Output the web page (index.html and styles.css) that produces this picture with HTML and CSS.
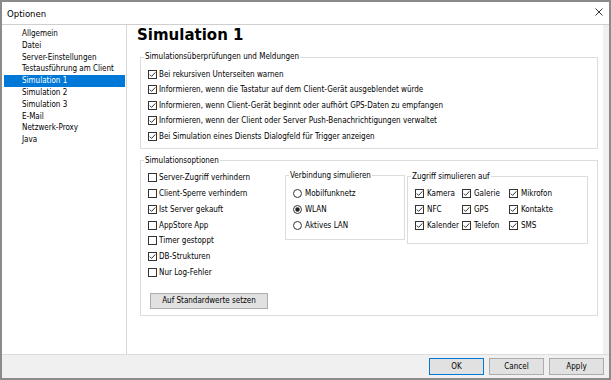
FILE: index.html
```html
<!DOCTYPE html>
<html lang="de">
<head>
<meta charset="utf-8">
<title>Optionen</title>
<link rel="stylesheet" href="styles.css">
</head>
<body>
<div class="window">
  <header class="titlebar">
    <span class="title">Optionen</span>
    <svg class="close" viewBox="0 0 8 8"><path d="M0.5 0.5 7.5 7.5 M7.5 0.5 0.5 7.5"/></svg>
  </header>
  <div class="main">
    <ul class="nav">
      <li>Allgemein</li>
      <li>Datei</li>
      <li>Server-Einstellungen</li>
      <li>Testausführung am Client</li>
      <li class="sel">Simulation 1</li>
      <li>Simulation 2</li>
      <li>Simulation 3</li>
      <li>E-Mail</li>
      <li>Netzwerk-Proxy</li>
      <li>Java</li>
    </ul>
    <section class="page">
      <h1>Simulation 1</h1>
      <fieldset class="group g1">
        <legend>Simulationsüberprüfungen und Meldungen</legend>
        <div class="checks">
          <label class="cb"><svg class="box" viewBox="0 0 9 9"><rect x=".5" y=".5" width="8" height="8"/><path d="M1.8 4.6 3.6 6.4 7.3 2.4"/></svg>Bei rekursiven Unterseiten warnen</label>
          <label class="cb"><svg class="box" viewBox="0 0 9 9"><rect x=".5" y=".5" width="8" height="8"/><path d="M1.8 4.6 3.6 6.4 7.3 2.4"/></svg>Informieren, wenn die Tastatur auf dem Client-Gerät ausgeblendet würde</label>
          <label class="cb"><svg class="box" viewBox="0 0 9 9"><rect x=".5" y=".5" width="8" height="8"/><path d="M1.8 4.6 3.6 6.4 7.3 2.4"/></svg>Informieren, wenn Client-Gerät beginnt oder aufhört GPS-Daten zu empfangen</label>
          <label class="cb"><svg class="box" viewBox="0 0 9 9"><rect x=".5" y=".5" width="8" height="8"/><path d="M1.8 4.6 3.6 6.4 7.3 2.4"/></svg>Informieren, wenn der Client oder Server Push-Benachrichtigungen verwaltet</label>
          <label class="cb"><svg class="box" viewBox="0 0 9 9"><rect x=".5" y=".5" width="8" height="8"/><path d="M1.8 4.6 3.6 6.4 7.3 2.4"/></svg>Bei Simulation eines Diensts Dialogfeld für Trigger anzeigen</label>
        </div>
      </fieldset>
      <fieldset class="group g2">
        <legend>Simulationsoptionen</legend>
        <div class="opts">
          <div class="col1">
            <label class="cb opt"><svg class="box" viewBox="0 0 9 9"><rect x=".5" y=".5" width="8" height="8"/></svg>Server-Zugriff verhindern</label>
            <label class="cb opt"><svg class="box" viewBox="0 0 9 9"><rect x=".5" y=".5" width="8" height="8"/></svg>Client-Sperre verhindern</label>
            <label class="cb opt"><svg class="box" viewBox="0 0 9 9"><rect x=".5" y=".5" width="8" height="8"/><path d="M1.8 4.6 3.6 6.4 7.3 2.4"/></svg>Ist Server gekauft</label>
            <label class="cb opt"><svg class="box" viewBox="0 0 9 9"><rect x=".5" y=".5" width="8" height="8"/></svg>AppStore App</label>
            <label class="cb opt"><svg class="box" viewBox="0 0 9 9"><rect x=".5" y=".5" width="8" height="8"/></svg>Timer gestoppt</label>
            <label class="cb opt"><svg class="box" viewBox="0 0 9 9"><rect x=".5" y=".5" width="8" height="8"/><path d="M1.8 4.6 3.6 6.4 7.3 2.4"/></svg>DB-Strukturen</label>
            <label class="cb opt"><svg class="box" viewBox="0 0 9 9"><rect x=".5" y=".5" width="8" height="8"/></svg>Nur Log-Fehler</label>
            <button class="btn std">Auf Standardwerte setzen</button>
          </div>
          <fieldset class="group sub conn">
            <legend>Verbindung simulieren</legend>
            <div class="radios">
              <label class="rb"><svg class="radio" viewBox="0 0 9 9"><circle cx="4.5" cy="4.5" r="4"/></svg>Mobilfunknetz</label>
              <label class="rb"><svg class="radio" viewBox="0 0 9 9"><circle cx="4.5" cy="4.5" r="4"/><circle class="dot" cx="4.5" cy="4.5" r="2.2"/></svg>WLAN</label>
              <label class="rb"><svg class="radio" viewBox="0 0 9 9"><circle cx="4.5" cy="4.5" r="4"/></svg>Aktives LAN</label>
            </div>
          </fieldset>
          <fieldset class="group sub acc">
            <legend>Zugriff simulieren auf</legend>
            <div class="access">
              <label class="cb ac"><svg class="box" viewBox="0 0 9 9"><rect x=".5" y=".5" width="8" height="8"/><path d="M1.8 4.6 3.6 6.4 7.3 2.4"/></svg>Kamera</label>
              <label class="cb ac"><svg class="box" viewBox="0 0 9 9"><rect x=".5" y=".5" width="8" height="8"/><path d="M1.8 4.6 3.6 6.4 7.3 2.4"/></svg>Galerie</label>
              <label class="cb ac"><svg class="box" viewBox="0 0 9 9"><rect x=".5" y=".5" width="8" height="8"/><path d="M1.8 4.6 3.6 6.4 7.3 2.4"/></svg>Mikrofon</label>
              <label class="cb ac"><svg class="box" viewBox="0 0 9 9"><rect x=".5" y=".5" width="8" height="8"/><path d="M1.8 4.6 3.6 6.4 7.3 2.4"/></svg>NFC</label>
              <label class="cb ac"><svg class="box" viewBox="0 0 9 9"><rect x=".5" y=".5" width="8" height="8"/><path d="M1.8 4.6 3.6 6.4 7.3 2.4"/></svg>GPS</label>
              <label class="cb ac"><svg class="box" viewBox="0 0 9 9"><rect x=".5" y=".5" width="8" height="8"/><path d="M1.8 4.6 3.6 6.4 7.3 2.4"/></svg>Kontakte</label>
              <label class="cb ac"><svg class="box" viewBox="0 0 9 9"><rect x=".5" y=".5" width="8" height="8"/><path d="M1.8 4.6 3.6 6.4 7.3 2.4"/></svg>Kalender</label>
              <label class="cb ac"><svg class="box" viewBox="0 0 9 9"><rect x=".5" y=".5" width="8" height="8"/><path d="M1.8 4.6 3.6 6.4 7.3 2.4"/></svg>Telefon</label>
              <label class="cb ac"><svg class="box" viewBox="0 0 9 9"><rect x=".5" y=".5" width="8" height="8"/><path d="M1.8 4.6 3.6 6.4 7.3 2.4"/></svg>SMS</label>
            </div>
          </fieldset>
        </div>
      </fieldset>
    </section>
  </div>
  <footer class="footer">
    <button class="btn dlg default">OK</button>
    <button class="btn dlg">Cancel</button>
    <button class="btn dlg">Apply</button>
  </footer>
</div>
</body>
</html>
```
FILE: styles.css
```css
* { box-sizing: border-box; margin: 0; padding: 0; }

body {
  width: 611px;
  height: 380px;
  overflow: hidden;
  background: #fff;
  color: #000;
  font-family: "DejaVu Sans Condensed", "DejaVu Sans", sans-serif;
  font-size: 8px;
}

.window {
  width: 611px;
  height: 380px;
  border: 2px solid #8b8b8b;
  background: #f0f0f0;
  display: flex;
  flex-direction: column;
}

.titlebar {
  flex: none;
  height: 23px;
  background: #fff;
  border-bottom: 1px solid #cfcfcf;
  display: flex;
  align-items: center;
  justify-content: space-between;
  padding: 0 6px 0 5px;
  font-size: 9.5px;
}

.close { width: 8px; height: 8px; margin-bottom: 2px; }
.close path { stroke: #333; stroke-width: 1; fill: none; }

.main {
  flex: none;
  height: 329px;
  display: flex;
}

.nav {
  flex: none;
  width: 125px;
  list-style: none;
  background: #fff;
  border-right: 1px solid #d6d6d6;
  padding: 3px 1px 0 2px;
}
.nav li {
  height: 11.8px;
  line-height: 11.8px;
  padding-left: 18px;
  white-space: nowrap;
}
.nav li.sel { background: #0078d7; color: #fff; }

.page {
  flex: 1;
  background: #fff;
  margin-right: 6px;
  padding: 0 5px 0 13px;
}

h1 {
  font-family: "DejaVu Sans", sans-serif;
  font-size: 15px;
  font-weight: bold;
  line-height: 18px;
  margin: 1px 0 0 -3px;
}

.group {
  border: 1px solid #dcdcdc;
  padding: 0;
  min-width: 0;
}
.group legend {
  margin-left: 3px;
  padding: 0 1px;
  line-height: 10px;
}

.g1 { margin: 8px 0 0; }
.checks { padding: 4.25px 0 4px 7px; }

.cb {
  display: flex;
  align-items: center;
  gap: 2px;
  height: 15.5px;
  white-space: nowrap;
}
.box { width: 9px; height: 9px; flex: none; }
.box rect { fill: #fff; stroke: #333; stroke-width: 1; }
.box path { fill: none; stroke: #333; stroke-width: 1; }

.g2 { margin: 7px 0 0; }
.opts {
  display: grid;
  grid-template-columns: 135px 120px 181px;
  column-gap: 2px;
  align-items: start;
  padding: 4px 0 6px 7px;
}
.cb.opt { height: 15.8px; }

.btn {
  font: inherit;
  color: #000;
  background: #e1e1e1;
  border: 1px solid #adadad;
}
.btn.std {
  display: block;
  width: 118px;
  height: 16px;
  margin: 12.3px 0 0 2px;
}

.conn { margin: 1px 0 0; }
.acc { margin: 2px 0 0; }
.radios { padding: 5px 0 5px 7px; }
.rb {
  display: flex;
  align-items: center;
  gap: 3px;
  height: 16px;
  white-space: nowrap;
}
.radio { width: 9px; height: 9px; flex: none; }
.radio circle { fill: #fff; stroke: #333; stroke-width: 1; }
.radio circle.dot { fill: #222; stroke: none; }

.access {
  display: grid;
  grid-template-columns: 47px 47px auto;
  padding: 4px 0 9px 7px;
}
.cb.ac { height: 16px; gap: 3px; }

.footer {
  flex: none;
  height: 24px;
  border-top: 1px solid #dcdcdc;
  display: flex;
  justify-content: flex-end;
  gap: 5px;
  padding: 3px 5px 0 0;
}
.btn.dlg { width: 55px; height: 17px; }
.btn.default { border-color: #0078d7; }
```
